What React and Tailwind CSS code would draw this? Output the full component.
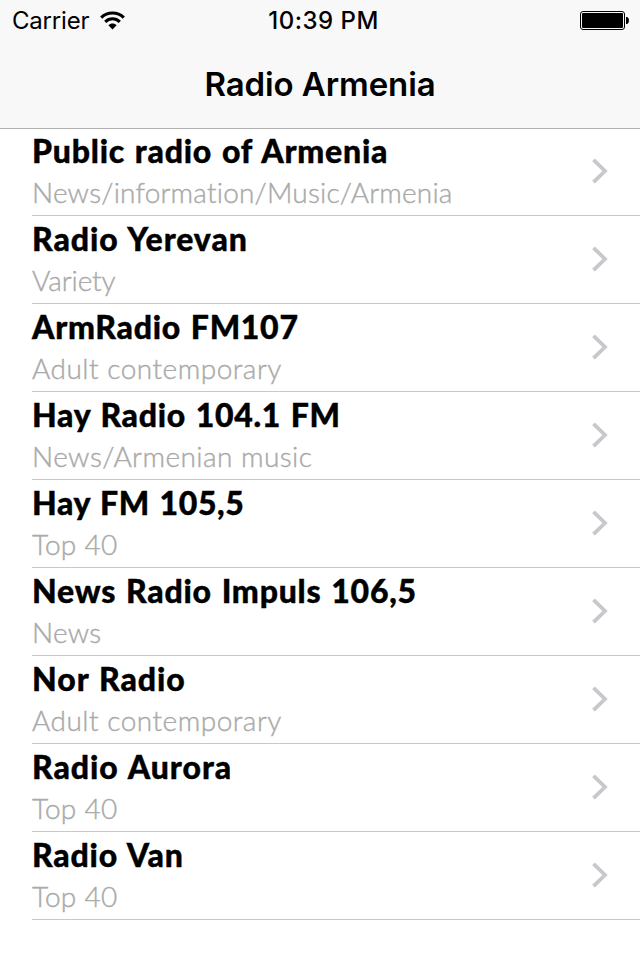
const stations = [
  { name: 'Public radio of Armenia', genre: 'News/information/Music/Armenia', nameCls: 'tracking-[0.77px]', genreCls: 'tracking-[0.2px]' },
  { name: 'Radio Yerevan', genre: 'Variety', nameCls: 'tracking-[0.92px]', genreCls: 'tracking-[-0.1px]' },
  { name: 'ArmRadio FM107', genre: 'Adult contemporary', nameCls: 'tracking-[0.73px]', genreCls: 'tracking-[0.5px]' },
  { name: 'Hay Radio 104.1 FM', genre: 'News/Armenian music', nameCls: 'tracking-[0.7px]', genreCls: 'tracking-[0.45px]' },
  { name: 'Hay FM 105,5', genre: 'Top 40', nameCls: 'tracking-[0.62px]', genreCls: 'tracking-[0.25px]' },
  { name: 'News Radio Impuls 106,5', genre: 'News', nameCls: 'tracking-[0.77px]', genreCls: 'tracking-[0.25px]' },
  { name: 'Nor Radio', genre: 'Adult contemporary', nameCls: 'tracking-[0.95px]', genreCls: 'tracking-[0.5px]' },
  { name: 'Radio Aurora', genre: 'Top 40', nameCls: 'tracking-[0.95px]', genreCls: 'tracking-[0.25px]' },
  { name: 'Radio Van', genre: 'Top 40', nameCls: 'tracking-[0.8px]', genreCls: 'tracking-[0.25px]' },
];

function Wifi() {
  return (
    <svg className="ml-[11px]" width="25" height="19" viewBox="0 0 25 19" fill="none" stroke="#000">
      <path d="M1.2 6.6C7.5 0.4 17.5 0.4 23.8 6.6" strokeWidth="3.1" />
      <path d="M5.2 10.8C9.4 6.8 15.6 6.8 19.8 10.8" strokeWidth="3.1" />
      <path d="M12.5 18.4L8.4 14.2C10.6 12 14.4 12 16.6 14.2Z" fill="#000" stroke="none" />
    </svg>
  );
}

function Battery() {
  return (
    <svg width="50" height="19" viewBox="0 0 50 19">
      <rect x="0.5" y="0.5" width="44" height="18" rx="2.5" fill="none" stroke="#000" />
      <rect x="2" y="2" width="41" height="15" rx="1" />
      <path d="M46 6H47C49.6 6.8 49.6 12.2 47 13H46Z" />
    </svg>
  );
}

function Chevron() {
  return (
    <svg className="-mt-px" width="18" height="28" viewBox="0 0 18 28" fill="none" stroke="#c7c7cc" strokeWidth="3.8">
      <path d="M3.5 2.8L15 14L3.5 25.2" />
    </svg>
  );
}

export default function App() {
  return (
    <div className="h-[960px] w-[640px] overflow-hidden bg-white text-black">
      <header className="relative h-32 bg-[#f8f8f8] font-['Inter',sans-serif] shadow-[0_1px_0_#b2b2b2]">
        <div className="grid h-[41px] grid-cols-3 items-center pl-3 pr-[10px] text-2xl">
          <div className="flex items-center">
            <span className="tracking-[-0.2px]">Carrier</span>
            <Wifi />
          </div>
          <span className="pl-[5px] text-center font-medium tracking-[0.5px]">10:39 PM</span>
          <div className="flex justify-end"><Battery /></div>
        </div>
        <h1 className="flex h-[87px] items-center justify-center pt-px text-[33px] font-semibold tracking-[-0.1px]">Radio Armenia</h1>
      </header>
      <ul className="font-['Lato',sans-serif] [font-variant-ligatures:none]">
        {stations.map((s) => (
          <li key={s.name} className="ml-8 flex h-[88px] items-center justify-between border-b border-[#c8c7cc] pr-8">
            <div className="-mt-[2px] whitespace-nowrap">
              <div className="h-[42px] text-[32px] leading-[42px] font-black [word-spacing:1.5px] [-webkit-text-stroke:0.4px_#000]"><span className={s.nameCls}>{s.name}</span></div>
              <div className="h-[40px] text-[28px] leading-[40px] font-light text-[#aaaaaa] [-webkit-text-stroke:0.4px_#aaaaaa]"><span className={s.genreCls}>{s.genre}</span></div>
            </div>
            <Chevron />
          </li>
        ))}
      </ul>
    </div>
  );
}
